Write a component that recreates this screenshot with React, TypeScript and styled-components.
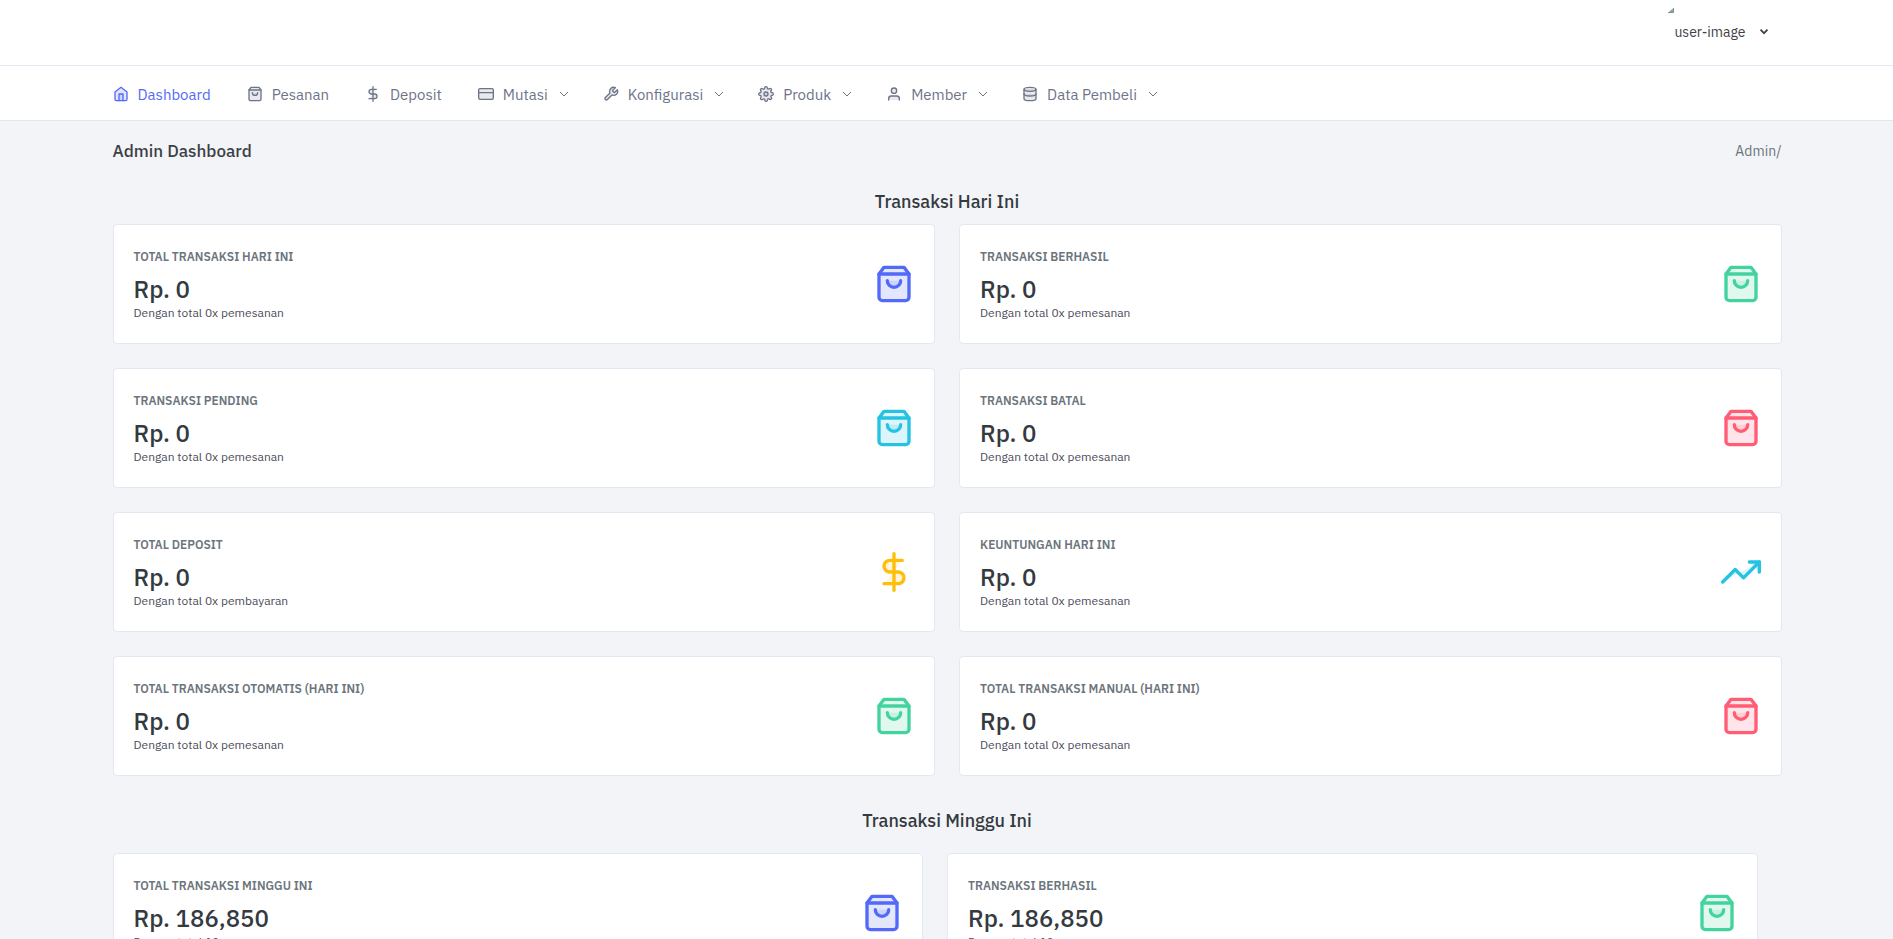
import React from 'react';
import styled, { createGlobalStyle } from 'styled-components';

const GlobalStyle = createGlobalStyle`
  *, *::before, *::after { box-sizing: border-box; }
  body {
    margin: 0;
    background: #f3f4f7;
    color: #4b4b5a;
    font-family: "IBM Plex Sans", Roboto, "Liberation Sans", sans-serif;
    font-size: 14px;
    line-height: 20px;
  }
`;

const colors = {
  primary: '#5369f8',
  success: '#43d39e',
  info: '#25c2e3',
  danger: '#ff5c75',
  warning: '#ffbe0b',
};

type Tone = keyof typeof colors;

const Container = styled.div`
  width: calc(100% - 189px);
  margin: 0 auto;
  padding: 0 17px 0 18px;
`;

const TopBar = styled.header`
  background: #fff;
  border-bottom: 1px solid #e2e7f1;
`;

const TopBarInner = styled(Container)`
  display: flex;
  justify-content: flex-end;
  height: 65px;
`;

const UserButton = styled.button`
  display: flex;
  align-items: center;
  height: 64px;
  padding: 0 11px;
  border: 0;
  background: none;
  color: #3e4148;
  font: inherit;
  cursor: pointer;
`;

const MissingImage = styled.svg`
  align-self: flex-start;
  width: 6px;
  height: 6px;
  margin-top: 7px;
`;

const UserName = styled.span`
  margin-right: 11px;
`;

const Nav = styled.nav`
  background: #fff;
  border-bottom: 1px solid #e2e7f1;
`;

const NavList = styled.ul`
  display: flex;
  align-items: center;
  height: 54px;
  margin: 0;
  padding: 2px 0 0;
  list-style: none;
`;

const NavItem = styled.li<{ $menu?: boolean }>`
  margin-right: ${(p) => (p.$menu ? 34 : 36)}px;
`;

const NavLink = styled.a<{ $active?: boolean }>`
  display: flex;
  align-items: center;
  color: ${(p) => (p.$active ? colors.primary : '#6e7488')};
  font-size: 15px;
  line-height: 22px;
  text-decoration: none;
  white-space: nowrap;
`;

const NavLabel = styled.span`
  margin-left: 9px;
  padding-top: 2px;
`;

const Feather = styled.svg<{ $size: number }>`
  flex: none;
  width: ${(p) => p.$size}px;
  height: ${(p) => p.$size}px;
  fill: currentColor;
  fill-opacity: 0.16;
  stroke: currentColor;
  stroke-width: 2;
  stroke-linecap: round;
  stroke-linejoin: round;
`;

const Chevron = styled.svg<{ $weight: number }>`
  flex: none;
  width: 14px;
  height: 14px;
  fill: none;
  stroke: currentColor;
  stroke-width: ${(p) => p.$weight};
`;

const NavChevron = styled(Chevron)`
  width: 10px;
  height: 10px;
  margin-left: 11px;
`;

const PageTitle = styled.div`
  display: flex;
  align-items: center;
  justify-content: space-between;
  height: 60px;
`;

const Heading = styled.h1`
  margin: 0;
  color: #3c4046;
  font-size: 17px;
  font-weight: 500;
  line-height: 24px;
`;

const Crumb = styled.a`
  color: #6c757d;
  text-decoration: none;
`;

const Section = styled.section<{ $first?: boolean }>`
  padding-top: ${(p) => (p.$first ? 9 : 33)}px;
`;

const SectionTitle = styled.h2<{ $gap: number }>`
  margin: 0 0 ${(p) => p.$gap}px;
  color: #343a40;
  font-size: 18px;
  font-weight: 500;
  line-height: 24px;
  text-align: center;
`;

const CardGrid = styled.div<{ $inset?: boolean }>`
  display: grid;
  grid-template-columns: 1fr 1fr;
  gap: 24px;
  padding-right: ${(p) => (p.$inset ? 24 : 0)}px;
`;

const CardBox = styled.article`
  display: flex;
  align-items: center;
  justify-content: space-between;
  min-height: 120px;
  padding: 20px;
  border: 1px solid #e2e7f1;
  border-radius: 4px;
  background: #fff;
`;

const CardTitle = styled.h3`
  margin: 2px 0 8px;
  color: #6c757d;
  font-size: 12px;
  font-weight: 600;
  line-height: 18px;
  text-transform: uppercase;
`;

const Amount = styled.p`
  margin: 0;
  color: #343a40;
  font-size: 24px;
  font-weight: 500;
  line-height: 30px;
`;

const Note = styled.p`
  margin: 0;
  font-size: 12px;
  line-height: 18px;
`;

const CardIcon = styled.span<{ $tone: Tone }>`
  display: flex;
  color: ${(p) => colors[p.$tone]};
`;

const shapes = {
  home: (
    <>
      <path d="M3 9l9-7 9 7v11a2 2 0 0 1-2 2H5a2 2 0 0 1-2-2z" />
      <polyline points="9 22 9 12 15 12 15 22" />
    </>
  ),
  bag: (
    <>
      <path d="M6 2L3 6v14a2 2 0 0 0 2 2h14a2 2 0 0 0 2-2V6l-3-4z" />
      <line x1="3" y1="6" x2="21" y2="6" />
      <path d="M16 10a4 4 0 0 1-8 0" />
    </>
  ),
  dollar: (
    <>
      <line x1="12" y1="1" x2="12" y2="23" />
      <path d="M17 5H9.5a3.5 3.5 0 0 0 0 7h5a3.5 3.5 0 0 1 0 7H6" />
    </>
  ),
  card: (
    <>
      <rect x="1" y="4" width="22" height="16" rx="2" ry="2" />
      <line x1="1" y1="10" x2="23" y2="10" />
    </>
  ),
  tool: (
    <path d="M14.7 6.3a1 1 0 0 0 0 1.4l1.6 1.6a1 1 0 0 0 1.4 0l3.77-3.77a6 6 0 0 1-7.94 7.94l-6.91 6.91a2.12 2.12 0 0 1-3-3l6.91-6.91a6 6 0 0 1 7.94-7.94l-3.76 3.76z" />
  ),
  settings: (
    <>
      <circle cx="12" cy="12" r="3" />
      <path d="M19.4 15a1.65 1.65 0 0 0 .33 1.82l.06.06a2 2 0 0 1 0 2.83 2 2 0 0 1-2.83 0l-.06-.06a1.65 1.65 0 0 0-1.82-.33 1.65 1.65 0 0 0-1 1.51V21a2 2 0 0 1-2 2 2 2 0 0 1-2-2v-.09A1.65 1.65 0 0 0 9 19.4a1.65 1.65 0 0 0-1.82.33l-.06.06a2 2 0 0 1-2.83 0 2 2 0 0 1 0-2.83l.06-.06a1.65 1.65 0 0 0 .33-1.82 1.65 1.65 0 0 0-1.51-1H3a2 2 0 0 1-2-2 2 2 0 0 1 2-2h.09A1.65 1.65 0 0 0 4.6 9a1.65 1.65 0 0 0-.33-1.82l-.06-.06a2 2 0 0 1 0-2.83 2 2 0 0 1 2.83 0l.06.06a1.65 1.65 0 0 0 1.82.33H9a1.65 1.65 0 0 0 1-1.51V3a2 2 0 0 1 2-2 2 2 0 0 1 2 2v.09a1.65 1.65 0 0 0 1 1.51 1.65 1.65 0 0 0 1.82-.33l.06-.06a2 2 0 0 1 2.83 0 2 2 0 0 1 0 2.83l-.06.06a1.65 1.65 0 0 0-.33 1.82V9a1.65 1.65 0 0 0 1.51 1H21a2 2 0 0 1 2 2 2 2 0 0 1-2 2h-.09a1.65 1.65 0 0 0-1.51 1z" />
    </>
  ),
  user: (
    <>
      <path d="M20 21v-2a4 4 0 0 0-4-4H8a4 4 0 0 0-4 4v2" />
      <circle cx="12" cy="7" r="4" />
    </>
  ),
  database: (
    <>
      <ellipse cx="12" cy="5" rx="9" ry="3" />
      <path d="M21 12c0 1.66-4 3-9 3s-9-1.34-9-3" />
      <path d="M3 5v14c0 1.66 4 3 9 3s9-1.34 9-3V5" />
    </>
  ),
  trend: (
    <>
      <polyline points="23 6 13.5 15.5 8.5 10.5 1 18" />
      <polyline points="17 6 23 6 23 12" />
    </>
  ),
};

type Shape = keyof typeof shapes;

function Icon({ shape, size }: { shape: Shape; size: number }) {
  return (
    <Feather $size={size} viewBox="0 0 24 24" aria-hidden="true">
      {shapes[shape]}
    </Feather>
  );
}

const menu: { label: string; shape: Shape; sub?: boolean }[] = [
  { label: 'Dashboard', shape: 'home' },
  { label: 'Pesanan', shape: 'bag' },
  { label: 'Deposit', shape: 'dollar' },
  { label: 'Mutasi', shape: 'card', sub: true },
  { label: 'Konfigurasi', shape: 'tool', sub: true },
  { label: 'Produk', shape: 'settings', sub: true },
  { label: 'Member', shape: 'user', sub: true },
  { label: 'Data Pembeli', shape: 'database', sub: true },
];

interface Stat {
  title: string;
  amount: string;
  note: string;
  shape: Shape;
  tone: Tone;
}

const orders = 'Dengan total 0x pemesanan';

const today: Stat[] = [
  { title: 'Total Transaksi Hari Ini', amount: 'Rp. 0', note: orders, shape: 'bag', tone: 'primary' },
  { title: 'Transaksi Berhasil', amount: 'Rp. 0', note: orders, shape: 'bag', tone: 'success' },
  { title: 'Transaksi Pending', amount: 'Rp. 0', note: orders, shape: 'bag', tone: 'info' },
  { title: 'Transaksi Batal', amount: 'Rp. 0', note: orders, shape: 'bag', tone: 'danger' },
  { title: 'Total Deposit', amount: 'Rp. 0', note: 'Dengan total 0x pembayaran', shape: 'dollar', tone: 'warning' },
  { title: 'Keuntungan Hari Ini', amount: 'Rp. 0', note: orders, shape: 'trend', tone: 'info' },
  { title: 'Total Transaksi Otomatis (Hari Ini)', amount: 'Rp. 0', note: orders, shape: 'bag', tone: 'success' },
  { title: 'Total Transaksi Manual (Hari Ini)', amount: 'Rp. 0', note: orders, shape: 'bag', tone: 'danger' },
];

const week: Stat[] = [
  { title: 'Total Transaksi Minggu Ini', amount: 'Rp. 186,850', note: 'Dengan total 10x pemesanan', shape: 'bag', tone: 'primary' },
  { title: 'Transaksi Berhasil', amount: 'Rp. 186,850', note: 'Dengan total 10x pemesanan', shape: 'bag', tone: 'success' },
];

function Card({ title, amount, note, shape, tone }: Stat) {
  return (
    <CardBox>
      <div>
        <CardTitle>{title}</CardTitle>
        <Amount>{amount}</Amount>
        <Note>{note}</Note>
      </div>
      <CardIcon $tone={tone}>
        <Icon shape={shape} size={40} />
      </CardIcon>
    </CardBox>
  );
}

export default function App() {
  return (
    <>
      <GlobalStyle />
      <TopBar>
        <TopBarInner>
          <UserButton type="button">
            <MissingImage viewBox="0 0 6 6" aria-hidden="true">
              <path d="M6 0v6H0z" fill="#e4e7ea" />
              <path d="M5 2v3H1l2-2z" fill="#7fb27c" />
              <path d="M5.5 1v4.500H0" fill="none" stroke="#8a8d91" />
            </MissingImage>
            <UserName>user-image</UserName>
            <Chevron $weight={3} viewBox="0 0 24 24" aria-hidden="true">
              <polyline points="6 8 12 14 18 8" />
            </Chevron>
          </UserButton>
        </TopBarInner>
      </TopBar>
      <Nav>
        <Container>
          <NavList>
            {menu.map((item, i) => (
              <NavItem key={item.label} $menu={item.sub}>
                <NavLink href="#" $active={i === 0}>
                  <Icon shape={item.shape} size={16} />
                  <NavLabel>{item.label}</NavLabel>
                  {item.sub && (
                    <NavChevron $weight={1} viewBox="0 0 10 10" aria-hidden="true">
                      <polyline points="1 3 5 7 9 3" />
                    </NavChevron>
                  )}
                </NavLink>
              </NavItem>
            ))}
          </NavList>
        </Container>
      </Nav>
      <Container as="main">
        <PageTitle>
          <Heading>Admin Dashboard</Heading>
          <Crumb href="#">Admin/</Crumb>
        </PageTitle>
        <Section $first>
          <SectionTitle $gap={10}>Transaksi Hari Ini</SectionTitle>
          <CardGrid>
            {today.map((s) => (
              <Card key={s.title} {...s} />
            ))}
          </CardGrid>
        </Section>
        <Section>
          <SectionTitle $gap={20}>Transaksi Minggu Ini</SectionTitle>
          <CardGrid $inset>
            {week.map((s) => (
              <Card key={s.title} {...s} />
            ))}
          </CardGrid>
        </Section>
      </Container>
    </>
  );
}
